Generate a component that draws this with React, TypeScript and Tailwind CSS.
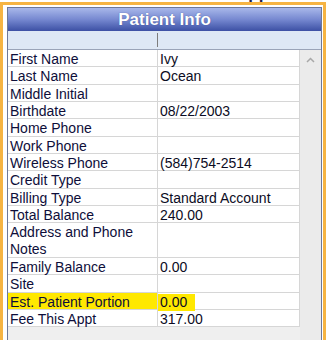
import React from 'react';

type Row = { label: string; value?: string; tall?: boolean; highlight?: boolean };

const ROWS: Row[] = [
  { label: 'First Name', value: 'Ivy' },
  { label: 'Last Name', value: 'Ocean' },
  { label: 'Middle Initial' },
  { label: 'Birthdate', value: '08/22/2003' },
  { label: 'Home Phone' },
  { label: 'Work Phone' },
  { label: 'Wireless Phone', value: '(584)754-2514' },
  { label: 'Credit Type' },
  { label: 'Billing Type', value: 'Standard Account' },
  { label: 'Total Balance', value: '240.00' },
  { label: 'Address and Phone Notes', tall: true },
  { label: 'Family Balance', value: '0.00' },
  { label: 'Site' },
  { label: 'Est. Patient Portion', value: '0.00', highlight: true },
  { label: 'Fee This Appt', value: '317.00' },
];

const InfoRow: React.FC<{ row: Row }> = ({ row }) => (
  <div
    className={`flex border-b border-[#d6d6d6] bg-white ${row.tall ? 'h-[34.66px]' : 'h-[17.33px]'}`}
  >
    <div
      className={`w-[150px] shrink-0 border-r border-[#d6d6d6] pl-[2px] pr-2 leading-[17px] pt-px text-[#0e0e3a] ${row.highlight ? 'bg-[#ffe800]' : ''}`}
    >
      {row.label}
    </div>
    <div className="flex-1 border-r border-[#d6d6d6] pl-[2px] leading-[17px] pt-px text-[#0c0c24]">
      {row.value && (
        <span className={row.highlight ? 'inline-block w-[37px] bg-[#ffe800] -ml-[2px] pl-[2px]' : ''}>
          {row.value}
        </span>
      )}
    </div>
  </div>
);

export default function App() {
  return (
    <div className="w-[328px] h-[340px] overflow-hidden bg-white font-['Liberation_Sans',Arial,sans-serif] text-[14px]">
      {/* clipped text of the element above */}
      <div className="h-[2px] overflow-hidden pl-[236px]">
        <div className="-mt-[15px] text-[17px] font-bold leading-[17px] text-[#1c1c48]">Appt</div>
      </div>

      <div className="w-[326px] border-[3px] border-[#f6b443] pt-[2px] pl-[4px] pr-[1px]">
        <div className="w-[315px] border border-[#6d7899] border-b-0">
          {/* title bar */}
          <div className="flex h-[23px] items-center justify-center bg-gradient-to-b from-[#a9b8ea] via-[#7688d0] to-[#3d50a4]">
            <span className="text-[17px] font-bold leading-none text-white [text-shadow:0_0_1px_#3a4a90]">
              Patient Info
            </span>
          </div>

          {/* column header strip */}
          <div className="flex h-[19px] border-b border-[#9aa4b8] bg-[#dee8f5]">
            <div className="w-[149px] shrink-0" />
            <div className="mt-[2px] h-[14px] w-px bg-[#7d7d7d]" />
          </div>

          <div className="flex">
            <div className="w-[292px] shrink-0 bg-[#eeeeee]">
              {ROWS.map((r) => (
                <InfoRow key={r.label} row={r} />
              ))}
              <div className="h-[20px] bg-[#efefef]" />
            </div>

            {/* scrollbar */}
            <div className="w-[21px] shrink-0 bg-[#ebebeb]">
              <div className="flex h-[20px] items-center justify-center">
                <svg width="9" height="6" viewBox="0 0 9 6">
                  <path d="M1 5 L4.5 1.5 L8 5" fill="none" stroke="#a8a8a8" strokeWidth="1.5" />
                </svg>
              </div>
            </div>
          </div>
        </div>
      </div>
    </div>
  );
}
